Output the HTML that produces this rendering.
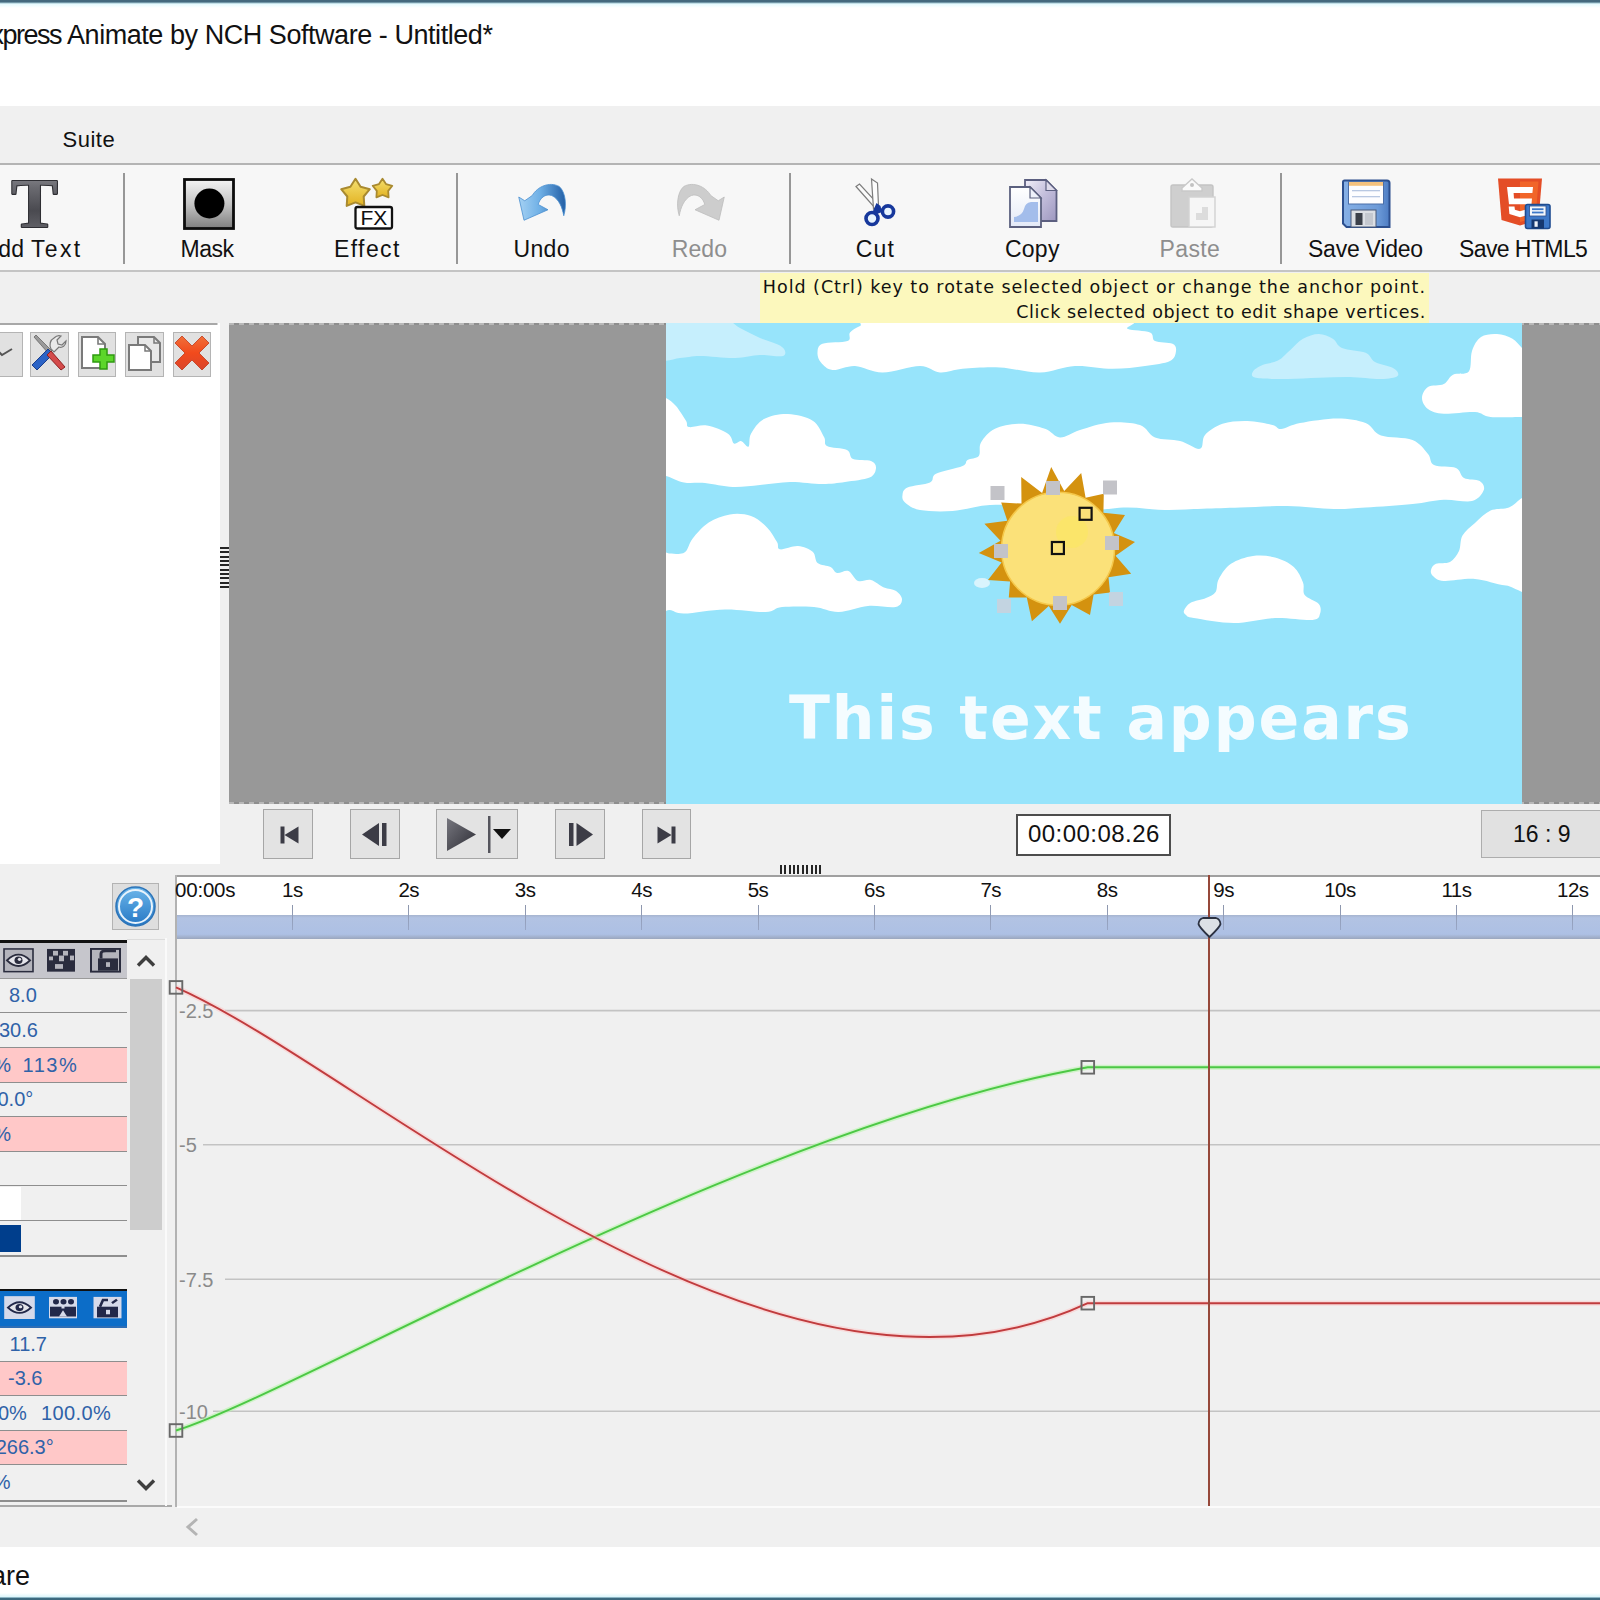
<!DOCTYPE html>
<html lang="en">
<head>
<meta charset="utf-8">
<title>Express Animate by NCH Software - Untitled*</title>
<style>
*{box-sizing:border-box;margin:0;padding:0}
html,body{width:1600px;height:1600px;overflow:hidden;background:#f0f0f0}
body{position:relative;font-family:"Liberation Sans","DejaVu Sans",sans-serif;color:#111}
.abs{position:absolute}
.t{position:absolute;white-space:nowrap;line-height:1}
/* window frame */
#topedge{left:0;top:0;width:1600px;height:8px;background:linear-gradient(#44697e 0,#44697e 2px,#9fc4d0 3px,#e6fbff 4px,#fff 8px)}
#titlebar{left:0;top:3px;width:1600px;height:103px;background:#fff}
#menubar{left:0;top:106px;width:1600px;height:57px;background:#f0f0f0}
#toolbar{left:0;top:163px;width:1600px;height:109px;background:#f7f7f7;border-top:2px solid #b4b4b4;border-bottom:2px solid #c4c4c4}
.sep{position:absolute;top:173px;width:2px;height:91px;background:#979797}
.lbl{position:absolute;white-space:nowrap;line-height:1;font-size:23px;top:238px;color:#111;transform-origin:0 0}
.lbl.dis{color:#8e8e8e}
/* hint */
#hint{left:760px;top:273px;width:669px;height:50px;background:#fcf8bd}
/* left panel */
#lpanel{left:0;top:323px;width:220px;height:541px;background:linear-gradient(#a8a8a8,#a8a8a8) 0 0/217.5px 2px no-repeat #fff}
.sbtn{position:absolute;top:332px;height:45px;background:#e1e1e1;border:1.5px solid #b4b4b4}
/* preview */
#preview{left:229px;top:323px;width:1371px;height:481px;background:#989898}
#sky{left:666px;top:323px;width:856px;height:481px;background:#97e4fb;overflow:hidden}
.pbtn{position:absolute;top:809px;height:50px;background:#e3e3e3;border:1.5px solid #a6a6a6}
/* timeline */
#ruler{left:176px;top:875px;width:1424px;height:62px;background:#fff;border-top:2px solid #a0a0a0}
#rulerband{left:176px;top:915px;width:1424px;height:23.5px;background:linear-gradient(#a6b4cf 0,#b2c3e3 12%,#adc0e4 80%,#9aa6bd 100%)}
.rt{position:absolute;top:880.1px;font-size:20.5px;letter-spacing:-.5px;line-height:1;white-space:nowrap;color:#111}
.tick{position:absolute;top:905px;width:1px;height:25px;background:linear-gradient(#8d96ac,#98a6c6)}
.row{position:absolute;left:0;width:127px;height:35px;border-bottom:2px solid #8f8f8f}
.row.pk{background:#ffc9c9}
.rv{position:absolute;white-space:nowrap;line-height:1;font-size:20px;color:#2f62a8}
#status{left:0;top:1547px;width:1600px;height:50px;background:#fff}
#botedge{left:0;top:1593px;width:1600px;height:7px;background:linear-gradient(#fff 0,#dff6fb 3.5px,#8db5c4 4.5px,#3d6b80 5.2px,#3a667c 7px)}
</style>
</head>
<body>
<!-- frame -->
<div class="abs" id="titlebar"></div>
<div class="abs" id="topedge"></div>
<div class="t" id="title" style="left:-9.5px;top:21.8px;font-size:27px;color:#111;letter-spacing:-.45px"><span style="letter-spacing:-1.5px">xpress </span>Animate by NCH Software - Untitled*</div>
<div class="abs" id="menubar"></div>
<div class="t" id="suite" style="left:62.5px;top:128.8px;font-size:22px;letter-spacing:.5px">Suite</div>
<div class="abs" id="toolbar"></div>
<!-- toolbar separators -->
<div class="sep" style="left:123px"></div>
<div class="sep" style="left:456px"></div>
<div class="sep" style="left:789px"></div>
<div class="sep" style="left:1280px"></div>
<!-- Add Text icon -->
<svg class="abs" style="left:6px;top:174px" width="58" height="58" viewBox="0 0 58 58">
  <defs><linearGradient id="gT" x1="0" y1="0" x2="0" y2="1"><stop offset="0" stop-color="#9a9aa0"/><stop offset=".3" stop-color="#6a6a70"/><stop offset=".6" stop-color="#4a4a50"/><stop offset="1" stop-color="#707076"/></linearGradient></defs>
  <text x="28.5" y="52.5" text-anchor="middle" font-family="Liberation Serif,serif" font-weight="bold" font-size="70" fill="url(#gT)" stroke="#2e2e33" stroke-width="2.2" stroke-linejoin="round" paint-order="stroke">T</text>
</svg>
<div class="lbl" id="l0" style="left:-17.5px;letter-spacing:.3px">Add <span style="letter-spacing:2.3px">Text</span></div>
<!-- Mask icon -->
<svg class="abs" style="left:183px;top:178px" width="52" height="52" viewBox="0 0 52 52">
  <defs><linearGradient id="gM" x1="0" y1="0" x2="0" y2="1"><stop offset="0" stop-color="#f4f4f4"/><stop offset=".5" stop-color="#c4c4c4"/><stop offset="1" stop-color="#7e7e7e"/></linearGradient></defs>
  <rect x="1.5" y="1.5" width="49" height="49" fill="url(#gM)" stroke="#0c0c0c" stroke-width="2.8"/>
  <circle cx="26.4" cy="25.5" r="15" fill="#000"/>
</svg>
<div class="lbl" id="l1" style="left:180.5px;letter-spacing:-0.50px">Mask</div>
<!-- Effect icon -->
<svg class="abs" style="left:334px;top:172px" width="66" height="62" viewBox="334 172 66 62">
  <defs><linearGradient id="gS" x1="0" y1="0" x2="0" y2="1"><stop offset="0" stop-color="#f4e070"/><stop offset="1" stop-color="#e2b222"/></linearGradient></defs>
  <polygon points="355.5,178.8 360.6,186.8 369.8,189.2 363.7,196.5 364.3,205.9 355.5,202.4 346.7,205.9 347.3,196.5 341.2,189.2 350.4,186.8" fill="url(#gS)" stroke="#a98a30" stroke-width="2" stroke-linejoin="round"/>
  <polygon points="382.5,178.7 386.0,184.1 392.3,185.8 388.2,190.9 388.6,197.3 382.5,195.0 376.4,197.3 376.8,190.9 372.7,185.8 379.0,184.1" fill="url(#gS)" stroke="#a98a30" stroke-width="1.8" stroke-linejoin="round"/>
  <rect x="355.500" y="207" width="36.500" height="21.500" rx="2" fill="#fff" stroke="#111" stroke-width="2.3"/>
  <text x="373.800" y="225.300" text-anchor="middle" font-family="Liberation Sans,sans-serif" font-size="21" fill="#111">FX</text>
</svg>
<div class="lbl" id="l2" style="left:334.0px;letter-spacing:1.40px">Effect</div>
<!-- Undo icon -->
<svg class="abs" style="left:510px;top:176px" width="64" height="52" viewBox="510 176 64 52">
  <defs><linearGradient id="gU" x1="0" y1="0" x2="1" y2="0"><stop offset="0" stop-color="#a5d1f3"/><stop offset=".45" stop-color="#6fb0e6"/><stop offset="1" stop-color="#235fa6"/></linearGradient></defs>
  <path d="M518.75 197 L524.75 200.75 L532.25 195.500 C537.500 186.500 549.500 181.250 559.250 186.500 C566 192.500 566.750 206 563.750 215.750 C562.250 207.500 559.250 199.250 551.750 195.500 C545 193.250 539.750 198.500 538.250 204.500 L548 209.750 L524 220.250 Z" fill="url(#gU)" stroke="#4a8fd0" stroke-width=".8" stroke-linejoin="round"/>
</svg>
<div class="lbl" id="l3" style="left:513.5px;letter-spacing:0.33px">Undo</div>
<!-- Redo icon -->
<svg class="abs" style="left:668px;top:176px" width="64" height="52" viewBox="668 176 64 52">
  <defs><linearGradient id="gR" x1="0" y1="0" x2="1" y2="0"><stop offset="0" stop-color="#b4b4b4"/><stop offset=".6" stop-color="#cfcfcf"/><stop offset="1" stop-color="#e2e2e2"/></linearGradient></defs>
  <g transform="translate(1243,0) scale(-1,1)"><path d="M518.75 197 L524.75 200.75 L532.25 195.500 C537.500 186.500 549.500 181.250 559.250 186.500 C566 192.500 566.750 206 563.750 215.750 C562.250 207.500 559.250 199.250 551.750 195.500 C545 193.250 539.750 198.500 538.250 204.500 L548 209.750 L524 220.250 Z" fill="#cdcdcd" stroke="#bdbdbd" stroke-width=".8" stroke-linejoin="round"/></g>
</svg>
<div class="lbl dis" id="l4" style="left:671.7px;letter-spacing:0.10px">Redo</div>
<!-- Cut icon -->
<svg class="abs" style="left:850px;top:174px" width="54" height="58" viewBox="850 174 54 58">
  <path d="M856 186.500 L859.500 184 L877.500 203.500 L875 208 Z" fill="#fbfbfb" stroke="#7c7c7c" stroke-width="1.2"/>
  <path d="M871.500 179 L877.500 183 L878.500 206 L873.500 209 Z" fill="#fdfdfd" stroke="#7c7c7c" stroke-width="1.2"/>
  <circle cx="872" cy="218.500" r="6" fill="#e8f4ff" stroke="#17389c" stroke-width="3.6"/>
  <circle cx="888" cy="211.500" r="5.600" fill="#e8f4ff" stroke="#17389c" stroke-width="3.6"/>
  <path d="M873 211 L876.500 203 L880.500 206 L882 212 L877 214 Z" fill="#17389c"/>
</svg>
<div class="lbl" id="l5" style="left:855.8px;letter-spacing:1.10px">Cut</div>
<!-- Copy icon -->
<svg class="abs" style="left:1004px;top:175px" width="58" height="58" viewBox="1004 175 58 58">
  <defs><linearGradient id="gC" x1="0" y1="0" x2="0" y2="1"><stop offset="0" stop-color="#fff"/><stop offset="1" stop-color="#e3e9f7"/></linearGradient>
  <linearGradient id="gC2" x1="0" y1="0" x2="1" y2="1"><stop offset="0" stop-color="#f2f0f9"/><stop offset=".5" stop-color="#c2bddb"/><stop offset="1" stop-color="#9d97bf"/></linearGradient></defs>
  <path d="M1025 180 L1046 180 L1056.500 190.500 L1056.500 221 L1025 221 Z" fill="url(#gC2)" stroke="#5c5f80" stroke-width="1.8"/>
  <path d="M1046 180 L1046 190.500 L1056.500 190.500 Z" fill="#dedbeb" stroke="#5c5f80" stroke-width="1.2"/>
  <path d="M1010 187 L1030 187 L1041 198 L1041 227 L1010 227 Z" fill="url(#gC)" stroke="#5b607e" stroke-width="1.8"/>
  <path d="M1030 187 L1030 198 L1041 198 Z" fill="#eef1fa" stroke="#5b607e" stroke-width="1.2"/>
  <path d="M1014 222 L1014 217 Q1022 216 1024 209 Q1025 203 1031 202 L1038 202 L1038 222 Z" fill="#a3bdeb"/>
</svg>
<div class="lbl" id="l6" style="left:1005.0px;letter-spacing:0.23px">Copy</div>
<!-- Paste icon -->
<svg class="abs" style="left:1168px;top:176px" width="50" height="54" viewBox="0 0 50 54">
  <rect x="3" y="9" width="42" height="42" rx="2" fill="#cfcfcf" stroke="#c4c4c4" stroke-width="1.4"/>
  <path d="M14 12 L24 3 L34 12 L34 15 L14 15 Z" fill="#fafafa" stroke="#c9c9c9" stroke-width="1.4"/>
  <circle cx="24" cy="9" r="2" fill="#c2c2c2"/>
  <rect x="21" y="21" width="26" height="30" fill="#f6f6f6" stroke="#d2d2d2" stroke-width="1.4"/>
  <path d="M28 44 L28 37 L34 37 L34 31 L40 31 L40 44 Z" fill="#dcdcdc"/>
</svg>
<div class="lbl dis" id="l7" style="left:1159.6px;letter-spacing:0.35px">Paste</div>
<!-- Save Video icon -->
<svg class="abs" style="left:1340px;top:177px" width="52" height="54" viewBox="0 0 52 54">
  <defs><linearGradient id="gF" x1="0" y1="0" x2="1" y2="0"><stop offset="0" stop-color="#86b0e6"/><stop offset=".75" stop-color="#6c9ad8"/><stop offset="1" stop-color="#4d7cc2"/></linearGradient></defs>
  <path d="M4.500 3.500 L47 3.500 Q49.500 3.500 49.500 6 L49.500 50 L6.500 50 L3 46.500 L3 5 Q3 3.500 4.500 3.500 Z" fill="url(#gF)" stroke="#2c4f8e" stroke-width="2"/>
  <rect x="8.500" y="4.500" width="35" height="22.500" fill="#fdfdff" stroke="#4b6ea8" stroke-width="1"/>
  <rect x="9" y="5" width="34" height="3.800" fill="#f5c27e"/>
  <rect x="12" y="13" width="28" height="1.300" fill="#b9c8e2"/><rect x="12" y="19" width="28" height="1.300" fill="#b9c8e2"/>
  <rect x="11" y="33" width="25" height="17" fill="#dcdfe4" stroke="#4b5a78" stroke-width="1"/>
  <rect x="15.500" y="36" width="7" height="12" fill="#3b4049"/>
  <rect x="25" y="36" width="8" height="12" fill="#c4c8cf"/>
</svg>
<div class="lbl" id="l8" style="left:1308.0px;letter-spacing:-0.24px">Save Video</div>
<!-- Save HTML5 icon -->
<svg class="abs" style="left:1496px;top:176px" width="58" height="56" viewBox="0 0 58 56">
  <path d="M2 2.500 L46 2.500 L42.500 44 L24 49.500 L5.500 44 Z" fill="#e44d26"/>
  <path d="M24 5.500 L42.500 5.500 L39.500 41.500 L24 46 Z" fill="#f16529"/>
  <path d="M11 11 L37 11 L36.400 17 L17.600 17 L18 22.500 L36 22.500 L34.600 38 L24 41.200 L13.400 38 L12.700 30.500 L18.500 30.500 L18.900 33.800 L24 35.200 L29.100 33.800 L29.600 28.300 L13 28.300 Z" fill="#fff"/>
  <rect x="29.500" y="28.500" width="24.500" height="24" rx="2" fill="#3c78c8" stroke="#1f4c90" stroke-width="1.600"/>
  <rect x="33.500" y="30" width="16.500" height="10" fill="#f2f6fb" stroke="#2b4f8c" stroke-width=".8"/>
  <rect x="36" y="32.300" width="11.500" height="1.800" fill="#3c78c8"/><rect x="36" y="35.600" width="11.500" height="1.800" fill="#3c78c8"/>
  <rect x="35.500" y="43.500" width="12.500" height="9" fill="#16386f"/>
  <rect x="38.500" y="45.300" width="3.200" height="5.500" fill="#eef2f8"/>
</svg>
<div class="lbl" id="l9" style="left:1459.0px;letter-spacing:-0.59px">Save HTML5</div>

<div class="abs" id="hint"></div>
<div class="t" id="h1" style="right:174px;top:279px;font-size:17.5px;font-family:'DejaVu Sans','Liberation Sans',sans-serif;letter-spacing:.97px;color:#111">Hold (Ctrl) key to rotate selected object or change the anchor point.</div>
<div class="t" id="h2" style="right:174px;top:304px;font-size:17.5px;font-family:'DejaVu Sans','Liberation Sans',sans-serif;letter-spacing:.62px;color:#111">Click selected object to edit shape vertices.</div>

<div class="abs" id="lpanel"></div>
<!-- small tool buttons -->
<div class="sbtn" style="left:-12px;width:35px"></div>
<svg class="abs" style="left:-5px;top:347px" width="20" height="14" viewBox="0 0 20 14"><path d="M1 2 L7 8 L17 2" fill="none" stroke="#555" stroke-width="2"/></svg>
<div class="sbtn" style="left:30px;width:39px"></div>
<svg class="abs" style="left:30px;top:332px" width="39" height="45" viewBox="0 0 39 45">
  <path d="M4 5 L6 3 L22 19 L19 22 Z" fill="#9a9a9a" stroke="#666" stroke-width=".8"/>
  <path d="M2 33 L18 17 L23 22 L7 38 Z" fill="#2b63c6" stroke="#1b3f8c" stroke-width="1"/>
  <path d="M21 19 L35 35 L31 38 L17 23 Z" fill="#d44b4b" stroke="#8f2020" stroke-width="1"/>
  <path d="M24 6 C20 8 19 13 21 17 L24 20 L29 15 C32 16 36 14 36 9 L32 13 L28 12 L27 8 L31 4 C28 3 26 4 24 6 Z" fill="#e9e9e9" stroke="#777" stroke-width="1.2"/>
</svg>
<div class="sbtn" style="left:78px;width:38px"></div>
<svg class="abs" style="left:78px;top:332px" width="40" height="45" viewBox="0 0 40 45">
  <path d="M4 5 L20 5 L27 12 L27 36 L4 36 Z" fill="#fff" stroke="#7a7a7a" stroke-width="2"/>
  <path d="M20 5 L20 12 L27 12" fill="none" stroke="#7a7a7a" stroke-width="1.6"/>
  <path d="M22 17 L29 17 L29 23 L36 23 L36 30 L29 30 L29 37 L22 37 L22 30 L15 30 L15 23 L22 23 Z" fill="#5cd62a" stroke="#2f9a10" stroke-width="1.5"/>
</svg>
<div class="sbtn" style="left:125px;width:39px"></div>
<svg class="abs" style="left:125px;top:332px" width="39" height="45" viewBox="0 0 39 45">
  <path d="M13 5 L29 5 L35 11 L35 30 L13 30 Z" fill="#e9e9e9" stroke="#7a7a7a" stroke-width="2"/>
  <path d="M29 5 L29 11 L35 11" fill="none" stroke="#7a7a7a" stroke-width="1.5"/>
  <path d="M4 13 L20 13 L26 19 L26 38 L4 38 Z" fill="#fff" stroke="#7a7a7a" stroke-width="2"/>
  <path d="M20 13 L20 19 L26 19" fill="none" stroke="#7a7a7a" stroke-width="1.5"/>
</svg>
<div class="sbtn" style="left:173px;width:38px"></div>
<svg class="abs" style="left:173px;top:332px" width="38" height="45" viewBox="0 0 38 45">
  <defs><linearGradient id="gX" x1="0" y1="0" x2="0" y2="1"><stop offset="0" stop-color="#f0703a"/><stop offset=".5" stop-color="#f24a1c"/><stop offset="1" stop-color="#d9452c"/></linearGradient></defs>
  <path d="M9 4 L19 14 L29 4 L36 11 L26 21 L36 31 L29 38 L19 28 L9 38 L2 31 L12 21 L2 11 Z" fill="url(#gX)" stroke="#c0391b" stroke-width=".8"/>
</svg>
<!-- vertical splitter grip -->
<div class="abs" style="left:220px;top:547.4px;width:9px;height:41.1px;background:repeating-linear-gradient(#252525 0 2px,transparent 2px 4.34px)"></div>

<div class="abs" id="preview"></div>
<div class="abs" style="left:229px;top:323px;width:1371px;height:2px;background:repeating-linear-gradient(90deg,#b8b8b8 0 5px,#8e8e8e 5px 10px)"></div>
<div class="abs" style="left:229px;top:802px;width:1371px;height:2px;background:repeating-linear-gradient(90deg,#b8b8b8 0 5px,#8e8e8e 5px 10px)"></div>
<div class="abs" id="sky">
<svg width="856" height="481" viewBox="666 323 856 481" style="position:absolute;left:0;top:0">
<!--CLOUDS_START-->
<path d="M660.0 320.0 C670.3 313.7 708.7 318.7 722.0 320.0 C735.3 321.3 733.7 325.0 740.0 328.0 C746.3 331.0 753.0 334.8 760.0 338.0 C767.0 341.2 778.2 344.0 782.0 347.0 C785.8 350.0 786.7 354.7 783.0 356.0 C779.3 357.3 768.0 354.7 760.0 355.0 C752.0 355.3 745.0 357.8 735.0 358.0 C725.0 358.2 709.2 356.0 700.0 356.0 C690.8 356.0 686.7 357.7 680.0 358.0 C673.3 358.3 663.3 364.3 660.0 358.0 C656.7 351.7 649.7 326.3 660.0 320.0 Z" fill="#c6effd"/>
<path d="M1253.0 371.5 C1254.1 369.4 1258.3 366.8 1262.5 365.0 C1266.7 363.2 1273.3 363.2 1278.0 360.6 C1282.7 358.1 1286.4 353.3 1290.6 349.7 C1294.8 346.1 1298.3 341.4 1303.0 338.8 C1307.7 336.1 1313.8 334.0 1318.8 334.0 C1323.7 334.0 1328.9 336.4 1332.8 338.8 C1336.7 341.1 1336.5 345.7 1342.0 348.0 C1347.5 350.3 1360.1 350.5 1365.6 352.8 C1371.1 355.1 1370.3 359.4 1375.0 362.0 C1379.7 364.6 1390.0 366.1 1393.8 368.4 C1397.5 370.7 1399.6 374.2 1397.5 376.0 C1395.4 377.8 1388.9 378.8 1381.0 379.0 C1373.1 379.2 1360.4 377.2 1350.0 377.0 C1339.6 376.8 1329.2 377.5 1318.8 377.8 C1308.3 378.1 1298.0 379.0 1287.5 379.0 C1277.0 379.0 1261.8 379.1 1256.0 377.8 C1250.2 376.6 1251.9 373.6 1253.0 371.5 Z" fill="#c6effd"/>
<path d="M817.5 352.5 C817.8 349.4 817.5 345.7 822.5 343.8 C827.5 341.8 842.9 342.9 847.5 341.0 C852.1 339.1 847.9 335.0 850.0 332.5 C852.1 330.0 855.8 328.1 860.0 326.0 C864.2 323.9 851.7 321.7 875.0 320.0 C898.3 318.3 958.3 316.0 1000.0 316.0 C1041.7 316.0 1103.8 317.9 1125.0 320.0 C1146.2 322.1 1123.3 326.7 1127.5 328.8 C1131.7 330.8 1145.4 330.5 1150.0 332.5 C1154.6 334.5 1151.2 339.1 1155.0 341.0 C1158.8 342.9 1169.0 342.1 1172.5 343.8 C1176.0 345.4 1176.4 348.1 1176.0 351.0 C1175.6 353.9 1175.2 358.5 1170.0 361.0 C1164.8 363.5 1154.6 364.7 1145.0 366.0 C1135.4 367.3 1124.2 368.8 1112.5 368.8 C1100.8 368.8 1087.1 365.4 1075.0 366.0 C1062.9 366.6 1052.5 372.2 1040.0 372.5 C1027.5 372.8 1012.9 368.1 1000.0 367.5 C987.1 366.9 972.5 367.9 962.5 368.8 C952.5 369.6 947.1 373.0 940.0 372.5 C932.9 372.0 929.6 366.0 920.0 366.0 C910.4 366.0 893.3 372.5 882.5 372.5 C871.7 372.5 863.3 366.4 855.0 366.0 C846.7 365.6 838.2 370.6 832.5 370.0 C826.8 369.4 823.5 365.4 821.0 362.5 C818.5 359.6 817.2 355.6 817.5 352.5 Z" fill="#fff"/>
<path d="M655.0 396.0 C656.8 383.0 662.5 396.3 666.0 398.0 C669.5 399.7 672.7 402.2 676.0 406.0 C679.3 409.8 683.8 417.2 686.0 420.7 C688.2 424.2 685.5 426.2 689.0 427.0 C692.5 427.8 700.5 424.5 707.0 425.6 C713.5 426.7 723.5 430.7 728.0 433.7 C732.5 436.7 731.8 442.3 734.0 443.5 C736.2 444.7 738.6 440.5 741.0 441.0 C743.4 441.5 746.8 447.9 748.5 446.7 C750.2 445.5 748.4 438.3 751.0 433.7 C753.6 429.1 757.8 422.3 764.0 419.0 C770.2 415.7 779.9 413.7 788.0 414.0 C796.1 414.3 806.7 416.9 812.7 420.7 C818.7 424.5 821.6 432.8 824.0 437.0 C826.4 441.2 823.2 443.8 827.0 446.0 C830.8 448.2 842.7 447.8 847.0 450.0 C851.3 452.2 849.0 457.2 853.0 459.0 C857.0 460.8 867.2 459.5 871.0 461.0 C874.8 462.5 876.2 465.2 876.0 468.0 C875.8 470.8 874.8 475.3 869.6 477.6 C864.4 479.9 852.9 480.9 845.0 482.0 C837.1 483.1 831.7 484.0 822.5 484.0 C813.3 484.0 800.4 481.8 790.0 482.0 C779.6 482.2 769.5 484.2 760.0 485.0 C750.5 485.8 742.2 487.3 733.0 487.0 C723.8 486.7 713.2 483.8 705.0 483.0 C696.8 482.2 690.5 483.7 684.0 482.5 C677.5 481.3 670.8 477.1 666.0 476.0 C661.2 474.9 656.8 489.3 655.0 476.0 C653.2 462.7 653.2 409.0 655.0 396.0 Z" fill="#fff"/>
<path d="M655.0 553.0 C657.3 543.6 664.1 553.5 669.0 553.4 C673.9 553.3 680.5 555.0 684.4 552.6 C688.3 550.2 688.5 543.7 692.5 538.7 C696.5 533.7 702.5 526.5 708.7 522.5 C714.9 518.5 722.9 515.5 729.9 514.4 C736.9 513.3 744.8 513.8 751.0 516.0 C757.2 518.2 762.7 523.1 767.0 527.4 C771.3 531.7 774.8 538.4 777.0 542.0 C779.2 545.6 776.5 548.6 780.0 549.3 C783.5 550.0 792.5 545.6 798.0 546.0 C803.5 546.4 809.4 548.9 812.7 551.7 C816.0 554.5 814.6 560.5 817.6 563.0 C820.6 565.5 827.4 565.4 830.6 567.0 C833.8 568.6 834.0 572.2 837.0 572.9 C840.0 573.6 845.0 569.6 848.5 571.0 C852.0 572.4 854.2 579.5 858.0 581.0 C861.8 582.5 866.7 578.9 871.0 580.0 C875.3 581.1 879.9 585.7 884.0 587.5 C888.1 589.3 892.6 588.8 895.6 590.7 C898.6 592.6 902.0 596.3 902.0 599.0 C902.0 601.7 901.3 605.8 895.6 607.0 C889.9 608.2 877.5 605.2 868.0 606.0 C858.5 606.8 847.7 611.8 838.7 612.0 C829.7 612.2 823.5 607.8 814.0 607.0 C804.5 606.2 790.1 606.2 782.0 607.0 C773.9 607.8 775.1 611.6 765.6 612.0 C756.1 612.4 738.6 609.1 725.0 609.4 C711.4 609.6 693.2 613.4 684.0 613.5 C674.8 613.6 674.5 610.6 669.7 610.0 C664.9 609.4 657.5 619.5 655.0 610.0 C652.5 600.5 652.7 562.4 655.0 553.0 Z" fill="#fff"/>
<path d="M902.5 495.0 C902.9 492.5 902.9 489.6 907.5 487.5 C912.1 485.4 925.2 484.8 930.0 482.5 C934.8 480.2 930.6 476.5 936.0 473.8 C941.4 471.0 957.2 468.3 962.5 466.0 C967.8 463.7 964.8 461.7 967.5 460.0 C970.2 458.3 976.5 458.9 978.8 456.0 C981.0 453.1 978.3 447.0 981.0 442.5 C983.7 438.0 988.5 431.9 995.0 428.8 C1001.5 425.6 1011.7 423.8 1020.0 423.8 C1028.3 423.8 1038.3 426.5 1045.0 428.8 C1051.7 431.0 1054.2 437.3 1060.0 437.5 C1065.8 437.7 1071.7 432.5 1080.0 430.0 C1088.3 427.5 1100.0 423.3 1110.0 422.5 C1120.0 421.7 1132.5 422.5 1140.0 425.0 C1147.5 427.5 1148.3 434.8 1155.0 437.5 C1161.7 440.2 1172.5 439.1 1180.0 441.0 C1187.5 442.9 1195.8 449.8 1200.0 448.8 C1204.2 447.8 1201.2 439.2 1205.0 435.0 C1208.8 430.8 1215.4 426.1 1222.5 423.8 C1229.6 421.4 1239.2 420.8 1247.5 421.0 C1255.8 421.2 1266.9 423.7 1272.5 425.0 C1278.1 426.3 1276.4 429.3 1281.0 429.0 C1285.6 428.7 1290.6 424.8 1300.0 423.0 C1309.4 421.2 1326.6 418.4 1337.5 418.4 C1348.4 418.4 1358.3 420.1 1365.6 423.0 C1372.8 425.9 1373.2 432.8 1381.0 435.6 C1388.8 438.4 1404.7 436.9 1412.5 440.0 C1420.3 443.1 1424.4 449.8 1428.0 454.0 C1431.6 458.2 1429.3 462.7 1434.0 465.0 C1438.7 467.3 1451.0 465.8 1456.0 468.0 C1461.0 470.2 1460.0 475.8 1464.0 478.0 C1468.0 480.2 1476.4 479.0 1479.7 481.0 C1483.0 483.0 1485.0 486.7 1483.8 490.0 C1482.5 493.3 1478.7 499.4 1472.0 501.0 C1465.3 502.6 1453.7 499.2 1443.8 499.7 C1433.8 500.2 1425.5 502.7 1412.5 504.0 C1399.5 505.3 1378.7 506.7 1365.6 507.5 C1352.5 508.3 1347.0 509.2 1334.0 509.0 C1321.0 508.8 1303.2 506.2 1287.5 506.0 C1271.8 505.8 1254.2 507.0 1240.0 507.5 C1225.8 508.0 1215.0 508.3 1202.5 508.8 C1190.0 509.2 1177.5 510.2 1165.0 510.0 C1152.5 509.8 1140.0 507.5 1127.5 507.5 C1115.0 507.5 1104.6 510.2 1090.0 510.0 C1075.4 509.8 1056.7 506.8 1040.0 506.0 C1023.3 505.2 1004.6 504.2 990.0 505.0 C975.4 505.8 964.2 510.2 952.5 511.0 C940.8 511.8 927.9 511.4 920.0 510.0 C912.1 508.6 907.9 505.0 905.0 502.5 C902.1 500.0 902.1 497.5 902.5 495.0 Z" fill="#fff"/>
<path d="M1422.0 398.0 C1422.0 394.3 1424.4 389.3 1428.0 387.0 C1431.6 384.7 1439.6 386.1 1443.8 384.0 C1447.9 381.9 1448.8 376.8 1453.0 374.7 C1457.2 372.6 1465.6 375.4 1468.8 371.5 C1471.9 367.6 1470.0 356.8 1472.0 351.0 C1474.0 345.2 1476.8 339.8 1481.0 337.0 C1485.2 334.2 1491.8 333.7 1497.0 334.0 C1502.2 334.3 1508.3 336.4 1512.5 338.8 C1516.7 341.1 1518.2 344.5 1522.0 348.0 C1525.8 351.5 1532.8 348.5 1535.0 360.0 C1537.2 371.5 1537.2 407.5 1535.0 417.0 C1532.8 426.5 1529.4 417.0 1522.0 417.0 C1514.6 417.0 1498.4 417.8 1490.6 417.0 C1482.8 416.2 1482.8 412.5 1475.0 412.0 C1467.2 411.5 1451.6 414.2 1443.8 413.8 C1435.9 413.2 1431.6 411.6 1428.0 409.0 C1424.4 406.4 1422.0 401.7 1422.0 398.0 Z" fill="#fff"/>
<path d="M1184.0 610.6 C1184.8 608.6 1186.9 604.9 1190.6 602.8 C1194.3 600.7 1201.8 599.8 1206.0 598.0 C1210.2 596.2 1213.5 595.2 1215.6 592.0 C1217.7 588.8 1216.2 583.7 1218.8 579.0 C1221.3 574.3 1225.3 567.6 1231.0 563.8 C1236.7 559.9 1245.7 557.0 1253.0 556.0 C1260.3 555.0 1268.2 555.7 1275.0 557.5 C1281.8 559.3 1289.1 562.8 1293.8 567.0 C1298.4 571.2 1301.2 577.8 1303.0 582.5 C1304.8 587.2 1302.1 591.4 1304.7 595.0 C1307.3 598.6 1316.2 600.9 1318.8 604.0 C1321.3 607.1 1321.0 611.1 1320.0 613.8 C1319.0 616.4 1320.0 619.3 1312.5 620.0 C1305.0 620.7 1288.1 617.5 1275.0 618.0 C1261.9 618.5 1247.5 623.0 1234.0 623.0 C1220.5 623.0 1201.8 619.3 1193.8 618.0 C1185.8 616.7 1187.6 616.2 1186.0 615.0 C1184.4 613.8 1183.2 612.6 1184.0 610.6 Z" fill="#fff"/>
<path d="M1431.0 570.0 C1431.5 568.0 1432.8 565.1 1436.0 563.8 C1439.2 562.4 1446.2 564.1 1450.0 562.0 C1453.8 559.9 1456.9 555.4 1459.0 551.0 C1461.1 546.6 1459.8 540.3 1462.5 535.6 C1465.2 530.9 1470.3 527.2 1475.0 523.0 C1479.7 518.8 1484.9 513.2 1490.6 510.6 C1496.3 508.0 1503.8 509.6 1509.0 507.5 C1514.2 505.4 1517.7 500.6 1522.0 498.0 C1526.3 495.4 1532.8 477.3 1535.0 492.0 C1537.2 506.7 1539.8 570.4 1535.0 586.0 C1530.2 601.6 1516.0 586.8 1506.0 585.6 C1496.0 584.4 1485.4 579.8 1475.0 579.0 C1464.6 578.2 1450.8 581.5 1443.8 581.0 C1436.8 580.5 1435.1 577.8 1433.0 576.0 C1430.9 574.2 1430.5 572.0 1431.0 570.0 Z" fill="#fff"/>
<ellipse cx="982" cy="583" rx="8" ry="5" fill="#d9f4fd"/>
<polygon points="1051.2,466.9 1064.2,491.1 1081.2,473.0 1085.6,497.7 1103.8,493.8 1103.4,512.7 1125.0,515.0 1113.8,532.9 1135.0,541.9 1115.6,555.7 1131.2,573.8 1108.5,577.3 1110.0,592.5 1093.6,594.5 1090.0,615.0 1071.7,605.1 1060.0,623.8 1048.8,606.0 1031.9,621.2 1026.8,597.6 1008.8,597.5 1010.1,581.5 988.0,580.0 1001.6,562.4 978.8,553.0 1000.5,540.8 984.4,523.8 1007.3,520.7 1001.2,502.5 1021.5,503.6 1021.2,476.9 1042.1,493.0" fill="#d4920f"/>
<circle cx="1058.0" cy="548.8" r="56.5" fill="#fbe179" stroke="#f5c84a" stroke-width="1.5"/>
<circle cx="1072" cy="532" r="16" fill="#fbe860" opacity=".6"/>
<rect x="990.5" y="486.0" width="14" height="14" fill="#c3c3c8"/>
<rect x="1046.0" y="481.0" width="14" height="14" fill="#c3c3c8"/>
<rect x="1103.0" y="480.5" width="14" height="14" fill="#c3c3c8"/>
<rect x="994.0" y="544.0" width="14" height="14" fill="#c3c3c8"/>
<rect x="1105.0" y="536.0" width="14" height="14" fill="#c3c3c8"/>
<rect x="1053.0" y="596.0" width="14" height="14" fill="#c3c3c8"/>
<rect x="997.0" y="599.0" width="14" height="14" fill="#f0c4c8" opacity=".5"/>
<rect x="1109.0" y="592.0" width="14" height="14" fill="#f0c4c8" opacity=".5"/>
<rect x="1079.6" y="507.8" width="12" height="12" fill="none" stroke="#111" stroke-width="2.2"/>
<rect x="1051.9" y="542.0" width="12" height="12" fill="none" stroke="#111" stroke-width="2.2"/>
<!--CLOUDS_END-->
</svg>
<div class="t" id="bigtext" style="left:123px;top:365px;font-family:'DejaVu Sans','Liberation Sans',sans-serif;font-weight:bold;font-size:60px;letter-spacing:1.9px;color:#f4fcff">This text appears</div>
</div>

<div class="pbtn" style="left:263px;width:50px"></div>
<svg class="abs" style="left:263px;top:810px" width="50" height="49" viewBox="0 0 50 49"><rect x="17.5" y="16.5" width="4" height="17" fill="#3c3c46"/><path d="M35.5 16.5 L35.5 33.5 L21.5 25 Z" fill="#3c3c46"/></svg>
<div class="pbtn" style="left:350px;width:50px"></div>
<svg class="abs" style="left:350px;top:810px" width="50" height="49" viewBox="0 0 50 49"><path d="M29 13 L29 36 L12 24.500 Z" fill="#3c3c46"/><rect x="32" y="13" width="4.5" height="23" fill="#3c3c46"/></svg>
<div class="pbtn" style="left:436px;width:82px"></div>
<svg class="abs" style="left:436px;top:810px" width="82" height="49" viewBox="0 0 82 49">
 <defs><linearGradient id="gP" x1="0" y1="0" x2="1" y2="1"><stop offset="0" stop-color="#77777f"/><stop offset="1" stop-color="#2c2c34"/></linearGradient></defs>
 <path d="M11 8 L11 41 L40 24.500 Z" fill="url(#gP)"/>
 <rect x="52" y="6" width="2.500" height="37" fill="#55555d"/>
 <path d="M57 19 L75 19 L66 29 Z" fill="#111"/>
</svg>
<div class="pbtn" style="left:555px;width:50px"></div>
<svg class="abs" style="left:555px;top:810px" width="50" height="49" viewBox="0 0 50 49"><rect x="14" y="13" width="4.5" height="23" fill="#3c3c46"/><path d="M21.500 13 L21.500 36 L38 24.500 Z" fill="#3c3c46"/></svg>
<div class="pbtn" style="left:642px;width:49px"></div>
<svg class="abs" style="left:642px;top:810px" width="50" height="49" viewBox="0 0 50 49"><path d="M15.5 16.5 L15.5 33.5 L29.5 25 Z" fill="#3c3c46"/><rect x="29.5" y="16.5" width="4" height="17" fill="#3c3c46"/></svg>
<!-- timecode -->
<div class="abs" style="left:1016px;top:814px;width:155px;height:42px;background:#fff;border:2px solid #4d4d4d"></div>
<div class="t" id="tc" style="left:1028px;top:821.5px;font-size:24px;letter-spacing:.45px">00:00:08.26</div>
<div class="abs" style="left:1481px;top:810px;width:125px;height:48px;background:#e1e1e1;border:1px solid #adadad"></div>
<div class="t" id="ar" style="left:1513px;top:823px;font-size:23px">16 : 9</div>
<!-- horizontal splitter grip -->
<div class="abs" style="left:779.9px;top:865px;width:41.4px;height:9.3px;background:repeating-linear-gradient(90deg,#252525 0 2px,transparent 2px 4.37px)"></div>

<!--TL_START-->
<div class="abs" id="ruler"></div>
<div class="abs" id="rulerband"></div>
<div class="abs" style="left:175px;top:875px;width:2px;height:632px;background:#b2b2b2"></div>
<div class="tick" style="left:291.9px"></div>
<div class="rt" style="left:262.4px;width:60px;text-align:center">1s</div>
<div class="tick" style="left:408.3px"></div>
<div class="rt" style="left:378.8px;width:60px;text-align:center">2s</div>
<div class="tick" style="left:524.7px"></div>
<div class="rt" style="left:495.2px;width:60px;text-align:center">3s</div>
<div class="tick" style="left:641.1px"></div>
<div class="rt" style="left:611.6px;width:60px;text-align:center">4s</div>
<div class="tick" style="left:757.5px"></div>
<div class="rt" style="left:728.0px;width:60px;text-align:center">5s</div>
<div class="tick" style="left:873.9px"></div>
<div class="rt" style="left:844.4px;width:60px;text-align:center">6s</div>
<div class="tick" style="left:990.3px"></div>
<div class="rt" style="left:960.8px;width:60px;text-align:center">7s</div>
<div class="tick" style="left:1106.7px"></div>
<div class="rt" style="left:1077.2px;width:60px;text-align:center">8s</div>
<div class="tick" style="left:1223.1px"></div>
<div class="rt" style="left:1193.6px;width:60px;text-align:center">9s</div>
<div class="tick" style="left:1339.5px"></div>
<div class="rt" style="left:1310.0px;width:60px;text-align:center">10s</div>
<div class="tick" style="left:1455.9px"></div>
<div class="rt" style="left:1426.4px;width:60px;text-align:center">11s</div>
<div class="tick" style="left:1572.3px"></div>
<div class="rt" style="left:1542.8px;width:60px;text-align:center">12s</div>
<div class="rt" id="r0" style="left:175px;letter-spacing:-.2px">00:00s</div>
<svg class="abs" style="left:160px;top:938px" width="1440" height="570" viewBox="160 938 1440 570">
<line x1="225" y1="1010.6" x2="1600" y2="1010.6" stroke="#c3c3c3" stroke-width="1.6"/>
<text x="179" y="1018.2" font-family="Liberation Sans,sans-serif" font-size="20" fill="#8a8a8a">-2.5</text>
<line x1="203" y1="1144.8" x2="1600" y2="1144.8" stroke="#c3c3c3" stroke-width="1.6"/>
<text x="179" y="1152.4" font-family="Liberation Sans,sans-serif" font-size="20" fill="#8a8a8a">-5</text>
<line x1="225" y1="1279.3" x2="1600" y2="1279.3" stroke="#c3c3c3" stroke-width="1.6"/>
<text x="179" y="1286.9" font-family="Liberation Sans,sans-serif" font-size="20" fill="#8a8a8a">-7.5</text>
<line x1="213" y1="1411.2" x2="1600" y2="1411.2" stroke="#c3c3c3" stroke-width="1.6"/>
<text x="179" y="1418.8" font-family="Liberation Sans,sans-serif" font-size="20" fill="#8a8a8a">-10</text>
<path d="M176 1430.5 C296 1393.4 750.1 1126.9 1087.8 1067.3 L1600 1067.3" fill="none" stroke="#b4f5a8" stroke-opacity=".55" stroke-width="5"/>
<path d="M176 1430.5 C296 1393.4 750.1 1126.9 1087.8 1067.3 L1600 1067.3" fill="none" stroke="#4cc845" stroke-width="1.9"/>
<path d="M176 987.4 C371.5 1073.3 770.2 1450.8 1087.8 1303.2 L1600 1303.2" fill="none" stroke="#ffc4c4" stroke-opacity=".5" stroke-width="5"/>
<path d="M176 987.4 C371.5 1073.3 770.2 1450.8 1087.8 1303.2 L1600 1303.2" fill="none" stroke="#c03c3e" stroke-width="1.9"/>
<rect x="169.7" y="981.1" width="12.6" height="12.6" fill="none" stroke="#686868" stroke-width="1.9"/>
<rect x="169.7" y="1424.2" width="12.6" height="12.6" fill="none" stroke="#686868" stroke-width="1.9"/>
<rect x="1081.5" y="1061.0" width="12.6" height="12.6" fill="none" stroke="#686868" stroke-width="1.9"/>
<rect x="1081.5" y="1296.9" width="12.6" height="12.6" fill="none" stroke="#686868" stroke-width="1.9"/>
</svg>
<div class="abs" style="left:1208.1px;top:875px;width:2.3px;height:631px;background:#96483a"></div>
<svg class="abs" style="left:1195px;top:914px" width="30" height="28" viewBox="1195 914 30 28"><path d="M1203 918 L1216 918 Q1220 919 1220.5 924 Q1220 927 1209.5 937 Q1199 927 1198.5 924 Q1199 919 1203 918 Z" fill="#dde1e6" stroke="#2c3242" stroke-width="1.8"/></svg>
<div class="abs" style="left:0;top:1505px;width:172px;height:2px;background:#a9a9a9"></div>
<div class="abs" style="left:177px;top:1506px;width:1423px;height:2px;background:#fbfbfb"></div>
<div class="abs" style="left:165px;top:938px;width:2px;height:568px;background:#fafafa"></div>
<svg class="abs" style="left:184px;top:1516px" width="18" height="22" viewBox="0 0 18 22"><path d="M13 3 L4 11 L13 19" fill="none" stroke="#b4b4b4" stroke-width="3"/></svg>
<div class="abs" style="left:112px;top:883px;width:47px;height:47px;background:#dedede;border:1px solid #b3b3b3"></div>
<svg class="abs" style="left:112px;top:883px" width="47" height="47" viewBox="0 0 47 47"><defs><linearGradient id="gH" x1="0" y1="0" x2="0" y2="1"><stop offset="0" stop-color="#6cb6ea"/><stop offset="1" stop-color="#2577c4"/></linearGradient></defs><circle cx="23.500" cy="23.500" r="19.500" fill="url(#gH)" stroke="#2d74b8" stroke-width="1.5"/><circle cx="23.500" cy="23.500" r="16.500" fill="none" stroke="#e8f3fc" stroke-width="2"/><text x="23.500" y="33.500" text-anchor="middle" font-family="Liberation Sans,sans-serif" font-weight="bold" font-size="28" fill="#fff">?</text></svg>
<div class="abs" style="left:0;top:940.0px;width:127px;height:3px;background:#111"></div>
<div class="abs" style="left:0;top:942.7px;width:127px;height:36px;background:#c6c6cc"></div>
<div class="abs" style="left:0;top:977.7px;width:127px;height:2px;background:#9a9a9a"></div>
<svg class="abs" style="left:3.0px;top:948.0px" width="120" height="24.6" viewBox="0 0 120 26" preserveAspectRatio="none">
<rect x="1" y="1" width="29" height="24" fill="#b4b4bc" stroke="#2a2c3e" stroke-width="1.6"/>
<path d="M4 13 Q15.500 1 27 13 Q15.500 25 4 13 Z" fill="#e4e4ea" stroke="#2a2c3e" stroke-width="2"/><circle cx="15.500" cy="13" r="4" fill="#2a2c3e"/><circle cx="16.500" cy="12" r="1.700" fill="#e4e4ea"/>
<rect x="44" y="1" width="28" height="24" fill="#2a2c3e"/>
<rect x="50" y="3" width="5" height="5" fill="#b4b4bc"/>
<rect x="60" y="3" width="5" height="5" fill="#b4b4bc"/>
<rect x="46" y="9" width="4" height="4" fill="#b4b4bc"/>
<rect x="56" y="8" width="5" height="6" fill="#b4b4bc"/>
<rect x="67" y="8" width="4" height="5" fill="#b4b4bc"/>
<rect x="52" y="17" width="8" height="5" fill="#b4b4bc"/>
<rect x="88" y="1" width="29" height="24" fill="#b4b4bc" stroke="#2a2c3e" stroke-width="2"/>
<rect x="95" y="11" width="20" height="13" fill="#2a2c3e"/><path d="M98 11 L98 6 Q98 3 103 3 L113 3" fill="none" stroke="#2a2c3e" stroke-width="3"/><rect x="103" y="15" width="4" height="5" fill="#b4b4bc"/>
</svg>
<div class="abs" style="left:0;top:979.0px;width:127px;height:34.0px;background:#f0f0f0"></div>
<div class="abs" style="left:0;top:1012.0px;width:127px;height:2px;background:#8e8e8e"></div>
<div class="abs" style="left:0;top:1013.0px;width:127px;height:34.5px;background:#f0f0f0"></div>
<div class="abs" style="left:0;top:1046.5px;width:127px;height:2px;background:#8e8e8e"></div>
<div class="abs" style="left:0;top:1047.5px;width:127px;height:35.0px;background:#ffc8c8"></div>
<div class="abs" style="left:0;top:1081.5px;width:127px;height:2px;background:#8e8e8e"></div>
<div class="abs" style="left:0;top:1082.5px;width:127px;height:34.5px;background:#f0f0f0"></div>
<div class="abs" style="left:0;top:1116.0px;width:127px;height:2px;background:#8e8e8e"></div>
<div class="abs" style="left:0;top:1117.0px;width:127px;height:35.0px;background:#ffc8c8"></div>
<div class="abs" style="left:0;top:1151.0px;width:127px;height:2px;background:#8e8e8e"></div>
<div class="abs" style="left:0;top:1152.0px;width:127px;height:34.0px;background:#f0f0f0"></div>
<div class="abs" style="left:0;top:1185.0px;width:127px;height:2px;background:#8e8e8e"></div>
<div class="abs" style="left:0;top:1186.0px;width:127px;height:35.0px;background:#f0f0f0"></div>
<div class="abs" style="left:0;top:1220.0px;width:127px;height:2px;background:#8e8e8e"></div>
<div class="abs" style="left:0;top:1221.0px;width:127px;height:35.0px;background:#f0f0f0"></div>
<div class="abs" style="left:0;top:1255.0px;width:127px;height:2px;background:#8e8e8e"></div>
<div class="abs" style="left:0;top:1187px;width:21px;height:33px;background:#fff"></div>
<div class="abs" style="left:0;top:1225px;width:21px;height:27px;background:#003e8c"></div>
<div class="abs" style="left:0;top:1288.5px;width:127px;height:3px;background:#111"></div>
<div class="abs" style="left:0;top:1291.2px;width:127px;height:36px;background:#0c6dc8"></div>
<div class="abs" style="left:0;top:1326.2px;width:127px;height:2px;background:#2d6db5"></div>
<svg class="abs" style="left:4.2px;top:1296.0px" width="120" height="23.2" viewBox="0 0 120 26" preserveAspectRatio="none">
<rect x="1" y="1" width="29" height="24" fill="#d6daea" stroke="#d6daea" stroke-width="1.6"/>
<path d="M4 13 Q15.500 1 27 13 Q15.500 25 4 13 Z" fill="#e4e4ea" stroke="#22284a" stroke-width="2"/><circle cx="15.500" cy="13" r="4" fill="#22284a"/><circle cx="16.500" cy="12" r="1.700" fill="#e4e4ea"/>
<rect x="45" y="1" width="28" height="24" fill="#d6daea"/>
<circle cx="52.0" cy="6.500" r="3" fill="#22284a"/>
<circle cx="59.5" cy="6.500" r="3" fill="#22284a"/>
<circle cx="67.0" cy="6.500" r="3" fill="#22284a"/>
<path d="M46 12 L72 12 L72 23 L46 23 Z" fill="#22284a"/><path d="M55 23 L59 16 L63 23 Z" fill="#d6daea"/><rect x="57.500" y="11" width="3" height="3" fill="#d6daea"/>
<rect x="89.500" y="1" width="28" height="24" fill="#d6daea"/>
<rect x="93" y="12" width="21" height="12" fill="#22284a"/><path d="M96 12 L99 4.500 L104 4.500 M108 8 L113 4" fill="none" stroke="#22284a" stroke-width="2.600"/><rect x="102" y="15.500" width="4" height="5" fill="#d6daea"/>
</svg>
<div class="abs" style="left:0;top:1328.0px;width:127px;height:33.5px;background:#f0f0f0"></div>
<div class="abs" style="left:0;top:1360.5px;width:127px;height:2px;background:#8e8e8e"></div>
<div class="abs" style="left:0;top:1361.5px;width:127px;height:34.5px;background:#ffc8c8"></div>
<div class="abs" style="left:0;top:1395.0px;width:127px;height:2px;background:#8e8e8e"></div>
<div class="abs" style="left:0;top:1396.0px;width:127px;height:34.7px;background:#f0f0f0"></div>
<div class="abs" style="left:0;top:1429.7px;width:127px;height:2px;background:#8e8e8e"></div>
<div class="abs" style="left:0;top:1430.7px;width:127px;height:34.3px;background:#ffc8c8"></div>
<div class="abs" style="left:0;top:1464.0px;width:127px;height:2px;background:#8e8e8e"></div>
<div class="abs" style="left:0;top:1465.0px;width:127px;height:35.5px;background:#f0f0f0"></div>
<div class="abs" style="left:0;top:1499.5px;width:127px;height:2px;background:#8e8e8e"></div>
<div class="rv" id="v1" style="left:9.0px;top:985.4px">8.0</div>
<div class="rv" id="v2" style="left:-1.0px;top:1019.9px">30.6</div>
<div class="rv" id="v3a" style="left:-40.0px;top:1054.9px">100%</div>
<div class="rv" id="v3b" style="left:22.5px;top:1054.9px;letter-spacing:1.5px">113%</div>
<div class="rv" id="v4" style="left:-2.5px;top:1089.4px">0.0°</div>
<div class="rv" id="v5" style="left:-40.0px;top:1123.9px">100%</div>
<div class="rv" id="v6" style="left:9.5px;top:1333.9px">11.7</div>
<div class="rv" id="v7" style="left:8.0px;top:1368.4px">-3.6</div>
<div class="rv" id="v8a" style="left:-41.0px;top:1402.9px">100.0%</div>
<div class="rv" id="v8b" style="left:41.0px;top:1402.9px;letter-spacing:.4px">100.0%</div>
<div class="rv" id="v9" style="left:-11.0px;top:1437.4px">-266.3°</div>
<div class="rv" id="v10" style="left:-40.5px;top:1472.4px">100%</div>
<div class="abs" style="left:127px;top:939px;width:38px;height:1px;background:#dcdcdc"></div>
<div class="abs" style="left:130px;top:979px;width:32px;height:251px;background:#cdcdcd"></div>
<svg class="abs" style="left:135px;top:953px" width="22" height="16" viewBox="0 0 22 16"><path d="M3 12.500 L11 4.500 L19 12.500" fill="none" stroke="#3e3e3e" stroke-width="3.4"/></svg>
<svg class="abs" style="left:135px;top:1477px" width="22" height="16" viewBox="0 0 22 16"><path d="M3 3.500 L11 11.500 L19 3.500" fill="none" stroke="#3e3e3e" stroke-width="3.4"/></svg>
<!--TL_END-->
<!--ST_START-->
<div class="abs" id="status"></div>
<div class="abs" id="botedge"></div>
<div class="t" id="st" style="left:-76.5px;top:1563px;font-size:27px;color:#111">Software</div>
<!--ST_END-->
</body>
</html>
